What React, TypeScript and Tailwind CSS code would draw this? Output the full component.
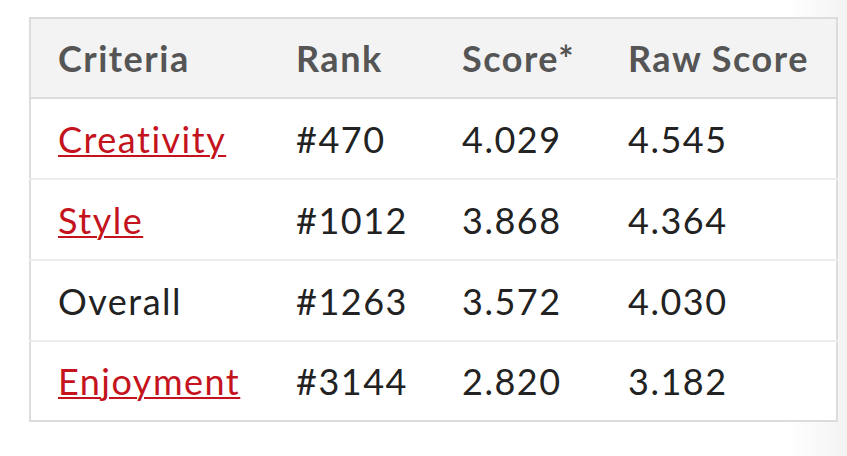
interface ScoreRow {
  criteria: string;
  link: boolean;
  rank: string;
  score: string;
  raw: string;
}

const rows: ScoreRow[] = [
  { criteria: 'Creativity', link: true, rank: '#470', score: '4.029', raw: '4.545' },
  { criteria: 'Style', link: true, rank: '#1012', score: '3.868', raw: '4.364' },
  { criteria: 'Overall', link: false, rank: '#1263', score: '3.572', raw: '4.030' },
  { criteria: 'Enjoyment', link: true, rank: '#3144', score: '2.820', raw: '3.182' },
];

export default function App() {
  return (
    <div
      className="w-full h-[456px] pt-[17px] pl-[29px] bg-[linear-gradient(to_right,#ffffff_93%,#f3f3f3)]"
      style={{ fontFamily: 'Lato, "Open Sans", sans-serif' }}
    >
      <table className="w-[807px] border-collapse border-2 border-[#dcdcdc] bg-white text-[36px] leading-none tracking-[1.5px] table-fixed">
        <colgroup>
          <col className="w-[239px]" />
          <col className="w-[166px]" />
          <col className="w-[166px]" />
          <col className="w-[236px]" />
        </colgroup>
        <thead>
          <tr className="h-[80px] bg-[#f3f3f3] border-b-2 border-[#dcdcdc]">
            {['Criteria', 'Rank', 'Score*', 'Raw Score'].map((h) => (
              <th key={h} className="text-left font-bold text-[#555] pl-[27px] align-middle">
                {h}
              </th>
            ))}
          </tr>
        </thead>
        <tbody>
          {rows.map((r, i) => (
            <tr
              key={r.criteria}
              className={i < rows.length - 1 ? 'h-[81px] border-b-2 border-[#ececec]' : 'h-[80px]'}
            >
              <td className="pl-[27px] align-middle">
                {r.link ? (
                  <a
                    href="#"
                    className="text-[#c4131d] underline decoration-2 underline-offset-[2px]"
                  >
                    {r.criteria}
                  </a>
                ) : (
                  <span className="text-[#222]">{r.criteria}</span>
                )}
              </td>
              <td className="pl-[27px] text-[#222] align-middle">{r.rank}</td>
              <td className="pl-[27px] text-[#222] align-middle">{r.score}</td>
              <td className="pl-[27px] text-[#222] align-middle">{r.raw}</td>
            </tr>
          ))}
        </tbody>
      </table>
    </div>
  );
}
